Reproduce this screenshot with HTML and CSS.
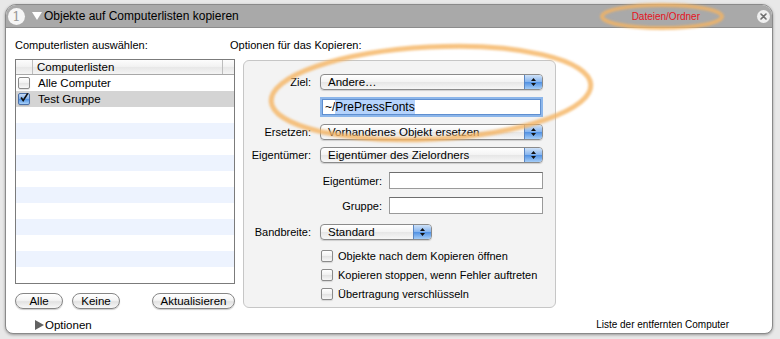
FILE: index.html
```html
<!DOCTYPE html>
<html lang="de">
<head>
  <meta charset="UTF-8">
  <title>Objekte auf Computerlisten kopieren</title>
  <link rel="stylesheet" href="styles.css">
</head>
<body>

  <div class="window">
    <div class="titlebar">
      <span class="step">1</span>
      <span class="disclosure-down"></span>
      <span class="title">Objekte auf Computerlisten kopieren</span>
      <span class="category">Dateien/Ordner</span>
      <span class="close">
        <svg width="13" height="13" viewBox="0 0 13 13"><path d="M4 4 L9 9 M9 4 L4 9" stroke="#6f6f6f" stroke-width="1.6" stroke-linecap="round"/></svg>
      </span>
    </div>

    <div class="content">
      <div class="left">
        <div class="caption">Computerlisten auswählen:</div>
        <div class="list">
          <div class="list-head">
            <span class="col-check"></span>
            <span class="col-name">Computerlisten</span>
            <span class="col-rest"></span>
          </div>
          <div class="list-body">
            <div class="row"><span class="cb"></span>Alle Computer</div>
            <div class="row selected">
              <span class="cb checked">
                <svg width="12" height="12" viewBox="0 0 12 12"><path d="M2.5 5.5 L5 9 L10.5 0.5" fill="none" stroke="#111" stroke-width="2"/></svg>
              </span>Test Gruppe
            </div>
          </div>
        </div>
        <div class="buttons">
          <span class="btn btn-small">Alle</span>
          <span class="btn btn-small">Keine</span>
          <span class="btn btn-wide">Aktualisieren</span>
        </div>
      </div>

      <div class="right">
        <div class="caption caption-right">Optionen für das Kopieren:</div>
        <div class="group">
          <div class="field">
            <label class="field-label">Ziel:</label>
            <div class="popup popup-full"><span class="popup-text">Andere…</span><span class="popup-arrows"></span></div>
          </div>
          <div class="field field-gap7">
            <span class="field-label"></span>
            <div class="textfield focused">~/<span class="selection">PrePressFonts</span></div>
          </div>
          <div class="field field-gap7">
            <label class="field-label">Ersetzen:</label>
            <div class="popup popup-full"><span class="popup-text">Vorhandenes Objekt ersetzen</span><span class="popup-arrows"></span></div>
          </div>
          <div class="field field-gap7">
            <label class="field-label">Eigentümer:</label>
            <div class="popup popup-full"><span class="popup-text">Eigentümer des Zielordners</span><span class="popup-arrows"></span></div>
          </div>
          <div class="subfield field-gap9">
            <label class="sub-label">Eigentümer:</label>
            <div class="textfield small"></div>
          </div>
          <div class="subfield field-gap8">
            <label class="sub-label">Gruppe:</label>
            <div class="textfield small"></div>
          </div>
          <div class="field field-gap10">
            <label class="field-label">Bandbreite:</label>
            <div class="popup popup-short"><span class="popup-text">Standard</span><span class="popup-arrows"></span></div>
          </div>
          <div class="checks">
            <div class="check-row"><span class="cb"></span>Objekte nach dem Kopieren öffnen</div>
            <div class="check-row"><span class="cb"></span>Kopieren stoppen, wenn Fehler auftreten</div>
            <div class="check-row"><span class="cb"></span>Übertragung verschlüsseln</div>
          </div>
        </div>
      </div>
    </div>

    <div class="footer">
      <span class="options"><span class="disclosure-right"></span>Optionen</span>
      <span class="remote">Liste der entfernten Computer</span>
    </div>
  </div>

  <!-- Markierungen -->
  <svg class="marks" width="780" height="339" viewBox="0 0 780 339">
    <defs><filter id="soft"><feGaussianBlur stdDeviation="1"/></filter></defs>
    <g fill="none" filter="url(#soft)">
      <ellipse cx="431" cy="93" rx="160" ry="46" transform="rotate(-3 431 93)" stroke="#f5b462" stroke-width="5" opacity=".8"/>
      <ellipse cx="662" cy="16.5" rx="60" ry="11.5" stroke="#f5b462" stroke-width="4" opacity=".8"/>
    </g>
  </svg>

</body>
</html>
```

FILE: styles.css
```css
body {
  margin: 0;
  width: 780px;
  height: 339px;
  overflow: hidden;
  position: relative;
  background: #e8e8e8;
  font-family: "Liberation Sans", Arial, sans-serif;
  font-size: 11px;
  color: #000;
}

.window {
  box-sizing: border-box;
  margin: 4px 0 0 5px;
  width: 768px;
  height: 330px;
  background: #fff;
  border: 1px solid #8a8a8a;
  border-radius: 11px 11px 8px 8px;
  box-shadow: 0 1px 3px rgba(0, 0, 0, 0.35);
  overflow: hidden;
  display: flex;
  flex-direction: column;
}

/* Titelleiste */
.titlebar {
  flex-shrink: 0;
  height: 22px;
  background: #a9a9a9;
  border-bottom: 1px solid #8c8c8c;
  display: flex;
  align-items: center;
}
.step {
  width: 17px;
  height: 17px;
  margin-left: 2px;
  border-radius: 50%;
  background: #f6f6f6;
  color: #9a9a9a;
  font: 13px/17px "DejaVu Serif", serif;
  text-align: center;
}
.disclosure-down {
  width: 0;
  height: 0;
  margin-left: 7px;
  border-left: 5px solid transparent;
  border-right: 5px solid transparent;
  border-top: 8px solid #fff;
}
.title {
  margin-left: 2px;
  font-size: 12px;
}
.category {
  margin-left: auto;
  margin-right: 57px;
  color: #e5121e;
  font-size: 10px;
}
.close {
  width: 13px;
  height: 13px;
  margin-right: 2px;
  border-radius: 50%;
  background: #efefef;
  display: flex;
}

/* Inhalt */
.content {
  display: flex;
  padding: 10px 0 0 9px;
}
.left {
  width: 220px;
}
.right {
  width: 313px;
  margin-left: 8px;
}
.caption {
  line-height: 14px;
  margin-bottom: 7px;
}
.caption-right {
  margin-left: -13px;
  margin-bottom: 8px;
}

.list {
  box-sizing: border-box;
  height: 225px;
  border: 1px solid #7b7b7b;
  overflow: hidden;
}
.list-head {
  height: 14px;
  line-height: 14px;
  font-size: 11.5px;
  display: flex;
  border-bottom: 1px solid #a8a8a8;
  background: linear-gradient(#fdfdfd, #f1f1f1 50%, #e7e7e7 51%, #f4f4f4);
}
.col-check {
  width: 16px;
  border-right: 1px solid #bdbdbd;
}
.col-name {
  flex: 1;
  padding-left: 4px;
  border-right: 1px solid #bdbdbd;
}
.col-rest {
  width: 11px;
}
.list-body {
  height: 208px;
  background: repeating-linear-gradient(#fff 0 16px, #edf3fe 16px 32px);
}
.row {
  height: 16px;
  display: flex;
  align-items: center;
  font-size: 11.5px;
}
.row.selected {
  background: #d4d4d4;
}
.row .cb {
  margin: 0 8px 0 2px;
}

.cb {
  box-sizing: border-box;
  width: 12px;
  height: 12px;
  border: 1px solid #8a8a8a;
  border-radius: 2px;
  background: linear-gradient(#fff, #f0f0f0 50%, #e2e2e2 51%, #f7f7f7);
  box-shadow: 0 1px 1px rgba(0, 0, 0, 0.12);
  flex-shrink: 0;
  display: flex;
}
.cb.checked {
  border-color: #4a6fa8;
  background: linear-gradient(#c9dcf5, #7fb0ec 50%, #4f91e4 51%, #a7d0f8);
  overflow: visible;
}
.cb.checked svg {
  margin: -2px 0 0 0;
}

.buttons {
  display: flex;
  margin-top: 9px;
}
.btn {
  box-sizing: border-box;
  height: 16px;
  line-height: 14px;
  font-size: 11.5px;
  text-align: center;
  border: 1px solid #868686;
  border-radius: 8px;
  background: linear-gradient(#fff, #f4f4f4 45%, #e2e2e2 55%, #f8f8f8);
  box-shadow: 0 1px 1px rgba(0, 0, 0, 0.2);
}
.btn-small {
  width: 48px;
  margin-right: 9px;
}
.btn-wide {
  width: 83px;
  margin-left: auto;
}

/* Optionen-Box */
.group {
  box-sizing: border-box;
  height: 248px;
  padding: 13px 12px 0 0;
  border: 1px solid #c6c6c6;
  border-radius: 6px;
  background: #f3f3f3;
}
.field {
  display: flex;
  align-items: center;
}
.field-gap7 { margin-top: 7px; }
.field-gap8 { margin-top: 8px; }
.field-gap9 { margin-top: 9px; }
.field-gap10 { margin-top: 10px; }
.field-label {
  width: 67px;
  margin-right: 9px;
  text-align: right;
  flex-shrink: 0;
}

.popup {
  box-sizing: border-box;
  height: 16px;
  display: flex;
  border: 1px solid #8b8b8b;
  border-radius: 4px;
  background: linear-gradient(#fff, #f3f3f3 50%, #e6e6e6 51%, #f7f7f7);
  box-shadow: 0 1px 1px rgba(0, 0, 0, 0.15);
  font-size: 11.5px;
  line-height: 14px;
  overflow: hidden;
}
.popup-full {
  width: 223px;
}
.popup-short {
  width: 112px;
}
.popup-text {
  flex: 1;
  padding-left: 7px;
}
.popup-arrows {
  width: 17px;
  border-left: 1px solid #5a86c2;
  background:
    url("data:image/svg+xml,%3Csvg xmlns='http://www.w3.org/2000/svg' width='17' height='14'%3E%3Cpath d='M6 6 L8.5 3 L11 6 Z M6 8 L8.5 11 L11 8 Z' fill='%23111'/%3E%3C/svg%3E") no-repeat center,
    linear-gradient(#cfe2f8, #84b3ee 50%, #4f90e3 51%, #a5cdf7);
}

.textfield {
  box-sizing: border-box;
  height: 17px;
  border: 1px solid #9a9a9a;
  border-top-color: #6e6e6e;
  background: #fff;
}
.textfield.focused {
  width: 219px;
  height: 16px;
  margin: 2px;
  border-color: #5f8fd0;
  box-shadow: 0 0 0 2px #8cb6ea;
  padding-left: 2px;
  font-size: 12px;
  line-height: 14px;
}
.selection {
  background: #b5d3fc;
}
.textfield.small {
  width: 154px;
}
.subfield {
  display: flex;
  align-items: center;
  justify-content: flex-end;
}
.sub-label {
  margin-right: 7px;
}

.checks {
  margin-top: 6px;
  padding-left: 77px;
}
.check-row {
  height: 19px;
  display: flex;
  align-items: center;
}
.check-row .cb {
  margin-right: 5px;
}

/* Fußzeile */
.footer {
  margin-top: auto;
  display: flex;
  justify-content: space-between;
  align-items: center;
  padding: 0 43px 1px 29px;
  line-height: 14px;
}
.options {
  display: flex;
  align-items: center;
  font-size: 11.5px;
}
.disclosure-right {
  width: 0;
  height: 0;
  margin-right: 1px;
  border-top: 5px solid transparent;
  border-bottom: 5px solid transparent;
  border-left: 9px solid #626262;
}
.remote {
  font-size: 10px;
}

.marks {
  position: absolute;
  top: 0;
  left: 0;
  pointer-events: none;
}
```
